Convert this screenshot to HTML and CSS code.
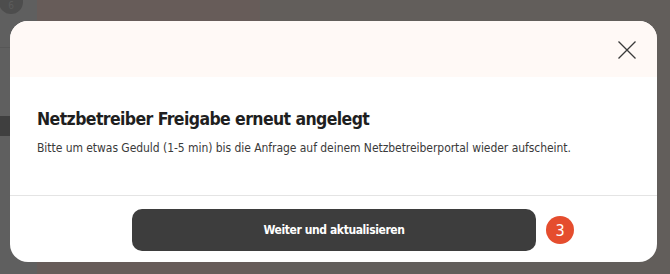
FILE: index.html
```html
<!DOCTYPE html>
<html lang="de">
<head>
<meta charset="utf-8">
<link rel="stylesheet" href="styles.css">
</head>
<body>
<div class="app">
  <div class="side">
    <div class="side-top"><span class="side-step">6</span></div>
    <div class="side-gap"></div>
    <div class="side-active"></div>
    <div class="side-rest"></div>
  </div>
  <div class="main-a"></div>
  <div class="main-b"></div>
</div>
<div class="modal">
  <div class="modal-head">
    <button class="close" aria-label="Schließen">
      <svg width="20" height="20" viewBox="0 0 20 20"><path d="M1.5 1.5L18.5 18.5M18.5 1.5L1.5 18.5" stroke="#3a3a3a" stroke-width="1.3" fill="none"/></svg>
    </button>
  </div>
  <div class="modal-body">
    <h2 class="title">Netzbetreiber Freigabe erneut angelegt</h2>
    <p class="text">Bitte um etwas Geduld (1-5 min) bis die Anfrage auf deinem Netzbetreiberportal wieder aufscheint.</p>
  </div>
  <div class="modal-foot">
    <button class="primary">Weiter und aktualisieren</button>
    <span class="badge">3</span>
  </div>
</div>
</body>
</html>
```
FILE: styles.css
```css
html, body {
  margin: 0;
  padding: 0;
  width: 670px;
  height: 274px;
  overflow: hidden;
}
body {
  font-family: "DejaVu Sans Condensed", "DejaVu Sans", sans-serif;
  position: relative;
  background: #625e5b;
}
.app {
  display: flex;
  height: 274px;
}
.side {
  width: 37px;
  display: flex;
  flex-direction: column;
  background: #5f5f5f;
}
.side-top {
  height: 47px;
  border-bottom: 1px solid #575757;
  position: relative;
}
.side-step {
  position: absolute;
  left: -1px;
  top: -6px;
  width: 24px;
  height: 20px;
  border-radius: 0 0 12px 12px;
  background: #4d4d4d;
  color: #5b5b5b;
  font-size: 10px;
  line-height: 12px;
  display: flex;
  align-items: flex-end;
  justify-content: center;
  padding-bottom: 2px;
  box-sizing: border-box;
}
.side-gap { height: 68px; }
.side-active { height: 20px; background: #3f3f3f; }
.side-rest { flex: 1; }
.main-a { width: 223px; background: #675c59; }
.main-b { flex: 1; background: #625e5b; }

.modal {
  position: absolute;
  left: 10px;
  top: 21px;
  width: 647px;
  height: 241px;
  background: #fff;
  border-radius: 18px;
  overflow: hidden;
  display: flex;
  flex-direction: column;
}
.modal-head {
  height: 56px;
  background: #fff9f6;
  display: flex;
  justify-content: flex-end;
  align-items: flex-start;
  padding: 19px 20px 0 0;
  box-sizing: border-box;
}
.close {
  border: 0;
  background: none;
  padding: 0;
  width: 20px;
  height: 20px;
  display: block;
}
.close svg { display: block; }
.modal-body {
  padding: 30px 27px 0 27px;
  height: 119px;
  box-sizing: border-box;
  border-bottom: 1px solid #e4e4e4;
}
.title {
  margin: 0;
  font-size: 17.5px;
  font-weight: bold;
  letter-spacing: -0.6px;
  color: #1f1f1f;
  line-height: 24px;
}
.text {
  margin: 8px 0 0 0;
  font-size: 12px;
  letter-spacing: -0.05px;
  color: #3a3a3a;
  line-height: 18px;
}
.modal-foot {
  flex: 1;
  display: flex;
  align-items: flex-start;
  padding: 13px 0 0 122px;
  gap: 10px;
}
.primary {
  width: 404px;
  height: 42px;
  border: 0;
  border-radius: 10px;
  background: #3d3d3d;
  color: #fff;
  font-family: inherit;
  font-size: 12px;
  letter-spacing: -0.4px;
  font-weight: bold;
}
.badge {
  width: 28px;
  height: 28px;
  border-radius: 50%;
  background: #e54d2e;
  color: #fff;
  font-size: 16px;
  display: flex;
  align-items: center;
  justify-content: center;
  margin-top: 7px;
}
```
